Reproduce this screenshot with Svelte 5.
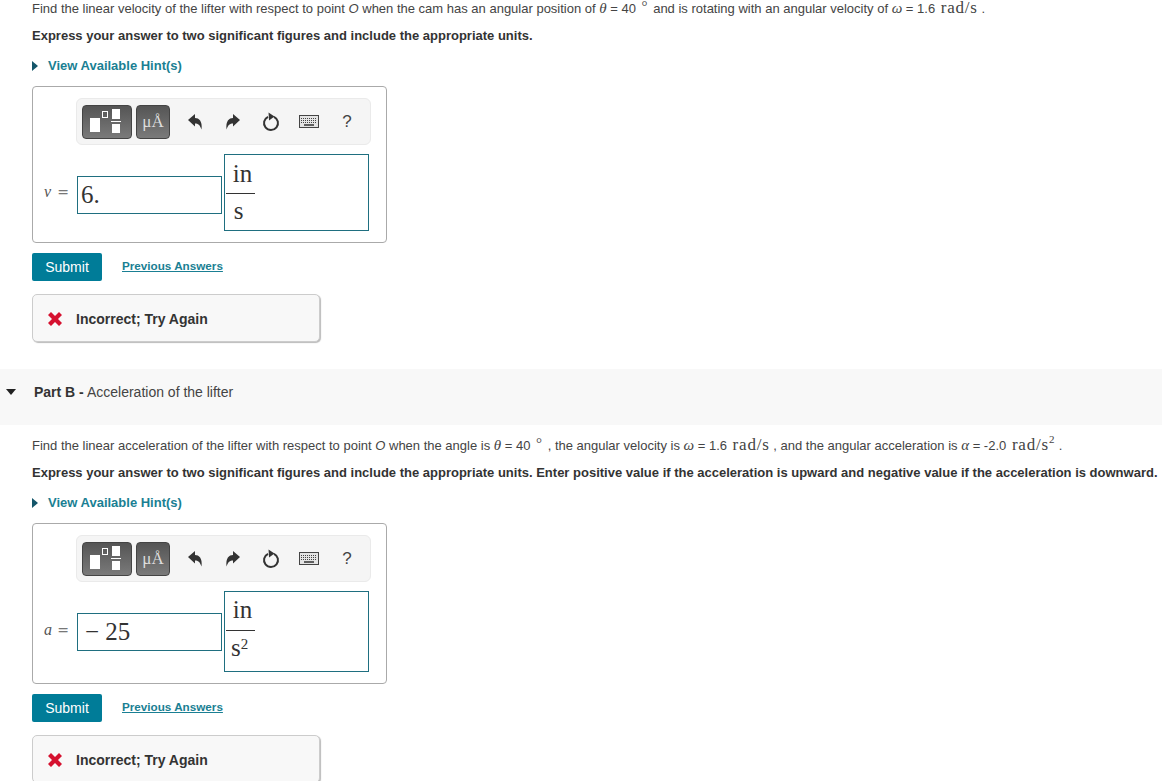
<script>
  const parts = [
    { name: "v", value: "6.", power: false },
    { name: "a", value: "− 25", power: true },
  ];
</script>

{#snippet answer(item)}
  <div class="answer" class:tall={item.power}>
    <div class="toolbar">
      <div class="tool-btn templates">
        <svg width="36" height="28" viewBox="0 0 36 28">
          <rect x="1" y="10" width="10" height="14" fill="#fff" />
          <rect x="13.500" y="3.500" width="5" height="6" fill="none" stroke="#fff" />
          <rect x="23" y="1" width="8" height="10" fill="#fff" />
          <rect x="22" y="13" width="10" height="1" fill="#fff" />
          <rect x="23" y="16" width="8" height="9" fill="#fff" />
        </svg>
      </div>
      <div class="tool-btn units">μÅ</div>
      <div class="tool-icon">
        <svg width="16" height="16" viewBox="0 0 16 16"><path d="M1 6 8 0V4C12 4 15.500 7 14.500 15.500 13 11 11 9.500 8 9.500V12.500Z" fill="#333" /></svg>
      </div>
      <div class="tool-icon">
        <svg width="16" height="16" viewBox="0 0 16 16"><path d="M15 6 8 0V4C4 4 .5 7 1.500 15.500 3 11 5 9.500 8 9.500V12.500Z" fill="#333" /></svg>
      </div>
      <div class="tool-icon">
        <svg width="18" height="20" viewBox="0 0 18 20">
          <path d="M6 4.800a7 7 0 1 0 6 0" fill="none" stroke="#333" stroke-width="2" />
          <path d="M6.500 .5 12.500 4.500 7 8.500z" fill="#333" />
        </svg>
      </div>
      <div class="tool-icon">
        <svg width="20" height="13" viewBox="0 0 20 13">
          <rect x="0.500" y="0.500" width="19" height="12" fill="#e4e4e4" stroke="#444" />
          <path d="M2 3.500h16M2 5.500h16M2 7.500h16" stroke="#444" stroke-dasharray="1 1" />
          <path d="M5 10h10" stroke="#333" stroke-width="1.500" />
        </svg>
      </div>
      <div class="tool-icon help">?</div>
    </div>
    <div class="equation">
      <span class="var"><i>{item.name}</i><span class="eq">=</span></span>
      <div class="field value">{item.value}</div>
      <div class="field unit">
        <div class="fraction">
          <span class="num">in</span>
          <span class="den">s{#if item.power}<sup>2</sup>{/if}</span>
        </div>
      </div>
    </div>
  </div>
  <div class="actions">
    <button class="submit">Submit</button>
    <a class="previous" href="#top">Previous Answers</a>
  </div>
  <div class="feedback">
    <svg width="14" height="14" viewBox="0 0 14 14"><path d="M0 3 3 0 7 4 11 0 14 3 10 7 14 11 11 14 7 10 3 14 0 11 4 7Z" fill="#d5112f" /></svg>
    <span>Incorrect; Try Again</span>
  </div>
{/snippet}

{#snippet hint()}
  <a class="hint" href="#top"><span class="arrow"></span>View Available Hint(s)</a>
{/snippet}

<main>
  <section class="body">
    <p>Find the linear velocity of the lifter with respect to point <i>O</i> when the cam has an angular position of <i class="m">θ</i> = 40 <span class="deg">°</span> and is rotating with an angular velocity of <i class="m">ω</i> = 1.6 <span class="rad">rad/s</span> .</p>
    <p class="strong">Express your answer to two significant figures and include the appropriate units.</p>
    {@render hint()}
    {@render answer(parts[0])}
  </section>

  <header class="part-head">
    <span class="caret"></span>
    <h2><b>Part B -</b> Acceleration of the lifter</h2>
  </header>

  <section class="body">
    <p>Find the linear acceleration of the lifter with respect to point <i>O</i> when the angle is <i class="m">θ</i> = 40 <span class="deg">°</span> , the angular velocity is <i class="m">ω</i> = 1.6 <span class="rad">rad/s</span> , and the angular acceleration is <i class="m">α</i> = -2.0 <span class="rad">rad/s<sup>2</sup></span> .</p>
    <p class="strong">Express your answer to two significant figures and include the appropriate units. Enter positive value if the acceleration is upward and negative value if the acceleration is downward.</p>
    {@render hint()}
    {@render answer(parts[1])}
  </section>
</main>

<style>
  :global(html), :global(body) {
    margin: 0;
    height: 781px;
    overflow: hidden;
    background: #fff;
  }
  main {
    font-family: "Liberation Sans", Arial, sans-serif;
    font-size: 13px;
    line-height: 16px;
    color: #444;
  }
  .body {
    padding: 1px 0 0 32px;
    white-space: nowrap;
  }
  p {
    margin: 0 0 11px;
    height: 16px;
  }
  .strong {
    font-weight: bold;
    color: #333;
    margin-bottom: 14px;
  }
  .m {
    font-family: "Liberation Serif", serif;
    font-size: 15px;
    line-height: 0;
  }
  .deg {
    font-family: "Liberation Serif", serif;
    font-size: 15px;
    line-height: 0;
    position: relative;
    top: -2px;
    margin: 0 2px;
  }
  .rad {
    font-family: "Liberation Serif", serif;
    font-size: 17px;
    line-height: 0;
    letter-spacing: 0.8px;
    margin-left: 2px;
  }
  sup {
    font-size: 11px;
    line-height: 0;
  }
  .hint {
    display: flex;
    align-items: center;
    height: 16px;
    color: #1a7f93;
    font-weight: bold;
    text-decoration: none;
  }
  .arrow {
    width: 0;
    height: 0;
    border-left: 6px solid #14566a;
    border-top: 5px solid transparent;
    border-bottom: 5px solid transparent;
    margin-right: 10px;
  }
  .answer {
    box-sizing: border-box;
    width: 355px;
    height: 157px;
    margin-top: 12px;
    border: 1px solid #aaa;
    border-radius: 4px;
    padding: 11px 15px 0 11px;
  }
  .answer.tall {
    height: 161px;
  }
  .toolbar {
    box-sizing: border-box;
    display: flex;
    align-items: center;
    width: 295px;
    height: 47px;
    margin-left: 32px;
    padding-left: 5px;
    background: #f5f5f5;
    border: 1px solid #eaeaea;
    border-radius: 6px;
  }
  .tool-btn {
    box-sizing: border-box;
    display: flex;
    align-items: center;
    justify-content: center;
    height: 34px;
    border: 1px solid #444;
    border-radius: 4px;
    background: linear-gradient(#555, #7a7a7a);
    color: #ddd;
  }
  .templates {
    width: 50px;
    margin-right: 4px;
  }
  .units {
    width: 34px;
    font-family: "Liberation Serif", serif;
    font-size: 17px;
  }
  .tool-icon {
    display: flex;
    align-items: center;
    justify-content: center;
    width: 38px;
    height: 34px;
  }
  .tool-icon:nth-child(3) {
    margin-left: 6px;
  }
  .help {
    font-size: 17px;
    color: #444;
  }
  .equation {
    display: flex;
    align-items: flex-start;
    margin-top: 9px;
  }
  .var {
    display: flex;
    justify-content: space-between;
    width: 25px;
    margin: 30px 8px 0 0;
    font-family: "Liberation Serif", serif;
    font-size: 16px;
    color: #555;
  }
  .eq {
    font-family: "DejaVu Serif", serif;
    font-size: 14px;
    color: #777;
  }
  .tall .var {
    margin-top: 31px;
  }
  .field {
    box-sizing: border-box;
    border: 1px solid #1f6f80;
  }
  .value {
    width: 145px;
    height: 38px;
    margin-top: 22px;
    padding-left: 3px;
    font-family: "Liberation Serif", serif;
    font-size: 25px;
    line-height: 36px;
    color: #333;
  }
  .tall .value {
    padding-left: 7px;
  }
  .unit {
    width: 145px;
    height: 77px;
    margin-left: 2px;
    padding-left: 1px;
    font-family: "Liberation Serif", serif;
    font-size: 25px;
    color: #333;
  }
  .tall .unit {
    height: 81px;
  }
  .fraction {
    width: 29px;
    text-align: center;
    line-height: 28px;
  }
  .num {
    display: block;
    border-bottom: 1px solid #333;
    padding: 5px 0 5px 4px;
  }
  .tall .num {
    padding: 4px 0 6px 4px;
  }
  .den {
    display: block;
    padding: 3px 4px 0 0;
    height: 32px;
    box-sizing: border-box;
  }
  .tall .den {
    padding: 3px 0 0 5px;
    text-align: left;
    height: 36px;
  }
  .den sup {
    font-size: 15px;
    position: relative;
    top: 2px;
  }
  .actions {
    display: flex;
    align-items: flex-start;
    margin-top: 10px;
    height: 28px;
  }
  .submit {
    width: 70px;
    height: 28px;
    border: 0;
    border-radius: 2px;
    padding: 0;
    background: #007c98;
    color: #fff;
    font: 14px "Liberation Sans", Arial, sans-serif;
  }
  .previous {
    margin: 5px 0 0 20px;
    font-size: 11.7px;
    font-weight: bold;
    line-height: 16px;
    color: #1a7f93;
  }
  .feedback {
    box-sizing: border-box;
    display: flex;
    align-items: center;
    gap: 14px;
    width: 288px;
    height: 48px;
    margin-top: 13px;
    padding: 1px 0 0 15px;
    background: #f8f8f8;
    border: 1px solid #ccc;
    border-radius: 5px;
    box-shadow: 1px 1px 1px #bbb;
    font-size: 14px;
    font-weight: bold;
    color: #333;
  }
  .part-head {
    display: flex;
    align-items: flex-start;
    height: 56px;
    margin-top: 27px;
    margin-bottom: 12px;
    background: #f8f8f8;
  }
  .caret {
    width: 0;
    height: 0;
    margin: 20px 0 0 6px;
    border-top: 6px solid #222;
    border-left: 5.500px solid transparent;
    border-right: 5.500px solid transparent;
  }
  h2 {
    margin: 15px 0 0 18px;
    font-size: 14px;
    font-weight: normal;
    line-height: 16px;
  }
  h2 b {
    color: #333;
  }
</style>
